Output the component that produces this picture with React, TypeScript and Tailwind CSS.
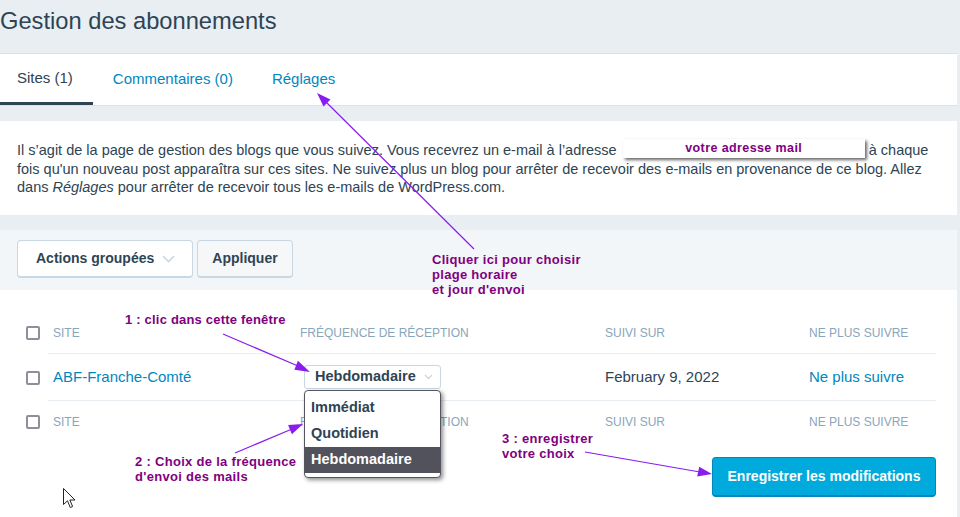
import React from "react";

function Checkbox() {
  return <span className="block w-[14px] h-[14px] border-2 border-[#8f8f9c] rounded-[2px] bg-white" />;
}

function Chevron({ className }: { className?: string }) {
  return (
    <svg className={className} width="13" height="8" viewBox="0 0 13 8" fill="none">
      <path d="M1 1l5.5 5.5L12 1" stroke="#c8d7e1" strokeWidth="1.6" />
    </svg>
  );
}

function HeaderRow({ bordered }: { bordered: boolean }) {
  return (
    <div className={bordered ? "flex h-[42px]" : "flex h-[41px]"}>
      <div className="w-[48px] pl-[26px] flex items-center">
        <Checkbox />
      </div>
      <div
        className={
          bordered
            ? "flex-1 grid grid-cols-[252px_305px_204px_1fr] items-center border-b border-[#e9eef3] text-[12px] text-[#87a6bc]"
            : "flex-1 grid grid-cols-[252px_305px_204px_1fr] items-center text-[12px] text-[#87a6bc]"
        }
      >
        <div className="pl-[5px]">SITE</div>
        <div>FRÉQUENCE DE RÉCEPTION</div>
        <div>SUIVI SUR</div>
        <div>NE PLUS SUIVRE</div>
      </div>
    </div>
  );
}

export default function App() {
  return (
    <div className="relative w-[960px] h-[517px] overflow-hidden bg-[#e9eef3] font-['Liberation_Sans',Arial,sans-serif] text-[#2e4453]">
      <div className="w-[957px] flex flex-col">
        <div className="h-[53px] pt-[7px]">
          <h1 className="text-[23.7px] leading-[28px] font-normal whitespace-nowrap">Gestion des abonnements</h1>
        </div>

        <div className="h-[53px] bg-white border-y border-[#d8e2e9] flex text-[15px]">
          <div className="pl-[17px] pr-[20px] flex items-center border-b-[3px] border-[#2e4453]">Sites (1)</div>
          <div className="px-[20px] flex items-center text-[#0087be]">Commentaires (0)</div>
          <div className="pl-[19px] flex items-center text-[#0087be]">Réglages</div>
        </div>

        <div className="mt-[15px] h-[94px] bg-white pt-[20px] px-[17px] text-[14.5px] leading-[18px] whitespace-nowrap">
          Il s’agit de la page de gestion des blogs que vous suivez. Vous recevrez un e-mail à l’adresse{" "}
          <span className="relative -top-[2px] inline-block align-top w-[242px] h-[19px] ml-[2px] bg-white shadow-[2px_2px_3px_rgba(0,0,0,0.6)] text-center text-[12.5px] leading-[18px] font-bold tracking-[0.4px] text-[#800080]">
            votre adresse mail
          </span>{" "}
          à chaque
          <br />
          fois qu'un nouveau post apparaîtra sur ces sites. Ne suivez plus un blog pour arrêter de recevoir des e-mails en provenance de ce blog. Allez
          <br />
          dans <em>Réglages</em> pour arrêter de recevoir tous les e-mails de WordPress.com.
        </div>

        <div className="mt-[15px] h-[60px] bg-[#f3f6f8] px-[17px] pt-[10px] flex gap-[4px]">
          <div className="w-[176px] h-[38px] bg-white border border-[#c8d7e1] border-b-2 rounded-[4px] flex items-center pl-[18px] gap-[8px] font-bold text-[14px]">
            <span>Actions groupées</span>
            <Chevron />
          </div>
          <div className="w-[96px] h-[38px] bg-[#f5f7f9] border border-[#c8d7e1] border-b-2 rounded-[4px] flex items-center justify-center font-bold text-[14px]">
            Appliquer
          </div>
        </div>

        <div className="h-[227px] bg-white pt-[22px] pr-[21px]">
          <HeaderRow bordered={true} />
          <div className="flex h-[47px]">
            <div className="w-[48px] pl-[26px] flex items-center">
              <Checkbox />
            </div>
            <div className="flex-1 grid grid-cols-[252px_305px_204px_1fr] items-center border-b border-[#e9eef3] text-[15px]">
              <div className="pl-[5px] text-[#0087be]">ABF-Franche-Comté</div>
              <div>
                <div className="relative ml-[4px] w-[137px] h-[24px] border border-[#c8d7e1] rounded-[3px] bg-white flex items-center pl-[10px] gap-[8px] font-bold text-[14.5px]">
                  <span>Hebdomadaire</span>
                  <svg width="9" height="6" viewBox="0 0 9 6" fill="none">
                    <path d="M1 1l3.5 3.5L8 1" stroke="#c8d7e1" strokeWidth="1.3" />
                  </svg>
                  <div className="absolute left-[-1px] top-[24px] w-[137px] h-[88px] bg-white border border-[#55555f] rounded-[4px] shadow-[2px_2px_4px_rgba(0,0,0,0.45)] py-[4px] flex flex-col z-10">
                    <div className="h-[26px] px-[6px] flex items-center">Immédiat</div>
                    <div className="h-[26px] px-[6px] flex items-center">Quotidien</div>
                    <div className="h-[26px] px-[6px] flex items-center bg-[#52525c] text-white">Hebdomadaire</div>
                  </div>
                </div>
              </div>
              <div>February 9, 2022</div>
              <div className="text-[#0087be]">Ne plus suivre</div>
            </div>
          </div>
          <HeaderRow bordered={false} />
          <div className="flex justify-end mt-[15px]">
            <div className="w-[224px] h-[40px] bg-[#00aadc] border border-[#0087be] border-b-2 rounded-[4px] flex items-center justify-center text-white font-bold text-[14px]">
              Enregistrer les modifications
            </div>
          </div>
        </div>
      </div>

      {/* annotations */}
      <div className="absolute left-[432px] top-[252px] text-[13px] leading-[15px] font-bold tracking-[0.3px] text-[#800080]">
        Cliquer ici pour choisir
        <br />
        plage horaire
        <br />
        et jour d'envoi
      </div>
      <div className="absolute left-[125px] top-[312px] text-[13px] leading-[15px] font-bold tracking-[0.2px] text-[#800080]">
        1 : clic dans cette fenêtre
      </div>
      <div className="absolute left-[135px] top-[454px] text-[13px] leading-[15px] font-bold tracking-[0.3px] text-[#800080]">
        2 : Choix de la fréquence
        <br />
        d'envoi des mails
      </div>
      <div className="absolute left-[502px] top-[431px] text-[13px] leading-[15px] font-bold tracking-[0.3px] text-[#800080]">
        3 : enregistrer
        <br />
        votre choix
      </div>

      <svg className="absolute left-0 top-0 pointer-events-none" width="960" height="517" viewBox="0 0 960 517">
        <g stroke="#8a1cf0" strokeWidth="1.2" fill="#8a1cf0">
          <line x1="474" y1="249" x2="325" y2="101" />
          <polygon points="317,93 330.5,99.5 323.5,106.5" stroke="none" />
          <line x1="223" y1="334" x2="298" y2="366" />
          <polygon points="310,372 294.4,369.8 297.9,360.8" stroke="none" />
          <line x1="235" y1="453" x2="292" y2="429" />
          <polygon points="303,424 291.9,434.2 288.1,425" stroke="none" />
          <line x1="585" y1="452" x2="700" y2="472" />
          <polygon points="712,474 697.2,476.6 699.2,466.8" stroke="none" />
        </g>
      </svg>

      <svg className="absolute left-[63px] top-[488px]" width="14" height="21" viewBox="0 0 14 21">
        <path d="M0.5 0.5 L0.5 16.5 L4.5 12.8 L7.3 19.5 L9.6 18.5 L6.9 12 L12 12 Z" fill="white" stroke="#222" strokeWidth="1" strokeLinejoin="round" />
      </svg>
    </div>
  );
}
